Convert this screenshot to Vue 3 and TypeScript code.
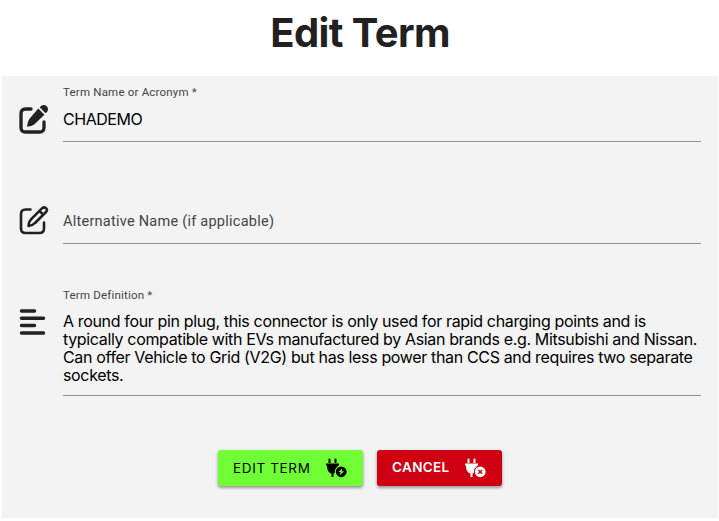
<script setup lang="ts">
import { ref } from 'vue'

const term = ref<string>('CHADEMO')
const definition: string[] = [
  'A round four pin plug, this connector is only used for rapid charging points and is',
  'typically compatible with EVs manufactured by Asian brands e.g. Mitsubishi and Nissan.',
  'Can offer Vehicle to Grid (V2G) but has less power than CCS and requires two separate',
  'sockets.',
]
</script>

<template>
  <main class="page">
    <h1 class="title">Edit Term</h1>
    <form class="panel" @submit.prevent>
      <div class="row first">
        <svg class="icon" viewBox="0 0 32 32">
          <path d="M13 5H7.5Q3 5 3 9.500V23.500Q3 28 7.500 28H21.500Q26 28 26 23.500V18" fill="none" stroke="currentColor" stroke-width="3.300" stroke-linecap="round" />
          <path d="M20.300 4.600L26.400 10.700L16.200 20.600Q14 22.500 9 22.800Q9.200 18 11.300 15ZM21.700 3.300L23.100 2Q26 0 28.800 2.300Q31.200 5.200 29 8L27.600 9.300Z" fill="currentColor" />
        </svg>
        <div class="field">
          <label class="label">Term Name or Acronym *</label>
          <div class="value">{{ term }}</div>
        </div>
      </div>
      <div class="row second">
        <svg class="icon" viewBox="0 0 32 32">
          <g fill="none" stroke="currentColor" stroke-width="2.600" stroke-linecap="round" stroke-linejoin="round">
            <path d="M12.500 4.500H7.500Q3 4.500 3 9V23.500Q3 28 7.500 28H21.500Q26 28 26 23.500V17.500" />
            <path d="M10.500 21Q10.500 17 13 14.300L24.200 3.200Q26 1.500 28 3.200Q29.800 5 28 7L17 18Q14.700 20.600 10.500 21ZM21.500 6L25.200 9.700" />
          </g>
        </svg>
        <div class="field"><label class="placeholder">Alternative Name (if applicable)</label></div>
      </div>
      <div class="row third">
        <svg class="icon" viewBox="0 0 32 32">
          <path d="M3.500 5H16.500M3.500 12.300H25.500M3.500 19.600H16.500M3.500 27H25.500" fill="none" stroke="currentColor" stroke-width="3.500" stroke-linecap="round" />
        </svg>
        <div class="field">
          <label class="label">Term Definition *</label>
          <div class="definition">
            <div v-for="(line, i) in definition" :key="i">{{ line }}</div>
          </div>
        </div>
      </div>
      <div class="actions">
        <button class="button edit" type="submit">
          <span>EDIT TERM</span>
          <svg class="plug" viewBox="0 0 22 20">
            <path d="M3.500 5V1.500Q3.500 .5 4.500 .5T5.500 1.500V5ZM9.500 5V1.500Q9.500 .5 10.500 .5T11.500 1.500V5ZM1 5.500H14V7.500H13V8.300Q9.500 10.200 9.700 15L8.500 15.800V19H6.500V15.800Q2.200 14.200 2 9V7.500H1Z" fill="currentColor" />
            <circle cx="16.200" cy="13.800" r="5.400" fill="currentColor" />
            <path class="mark" d="M17.400 10.200L13.300 14.100H15.700L14.700 17.400L19.100 13.300H16.600Z" />
          </svg>
        </button>
        <button class="button cancel" type="button">
          <span>CANCEL</span>
          <svg class="plug" viewBox="0 0 22 20">
            <path d="M3.500 5V1.500Q3.500 .5 4.500 .5T5.500 1.500V5ZM9.500 5V1.500Q9.500 .5 10.500 .5T11.500 1.500V5ZM1 5.500H14V7.500H13V8.300Q9.500 10.200 9.700 15L8.500 15.800V19H6.500V15.800Q2.200 14.200 2 9V7.500H1Z" fill="currentColor" />
            <circle cx="16.200" cy="13.800" r="5.400" fill="currentColor" />
            <path class="cross" d="M14.300 11.900L18.100 15.700M18.100 11.900L14.300 15.700" />
          </svg>
        </button>
      </div>
    </form>
  </main>
</template>

<style>
body { background: #fff; }
</style>
<style scoped>
* { box-sizing: border-box; }
.page { height: 521px; padding: 0 1px 3px 2px; font-family: Roboto, sans-serif; color: #212121; overflow: hidden; }
.title { height: 76px; margin: 0; padding-top: 9px; text-align: center; font: 700 40px/48px Inter, sans-serif; letter-spacing: -0.6px; }
.panel { height: 442px; background: #f3f3f3; padding: 0 17px 0 16px; }
.row { display: flex; }
.icon { width: 32px; height: 32px; flex: none; }
.field { flex: 1; margin-left: 13px; border-bottom: 1px solid #929292; white-space: nowrap; }
.first { height: 66px; }
.first .icon { margin-top: 28px; }
.label { display: block; height: 16px; font-size: 11.5px; line-height: 16px; color: #444; letter-spacing: .2px; }
.first .label { margin-top: 8px; }
.value { margin-top: 9px; font: 16px/20px Inter, sans-serif; color: #000; letter-spacing: -.45px; }
.second { height: 102px; }
.second .icon { margin-top: 63px; }
.placeholder { display: block; margin-top: 70px; font-size: 14.5px; line-height: 20px; color: #444; letter-spacing: .25px; }
.third { height: 152px; }
.third .icon { margin-top: 62px; margin-left: -.5px; margin-right: .5px; }
.third .label { margin-top: 43px; }
.definition { margin-top: 9px; font: 16px/18px Inter, sans-serif; color: #000; letter-spacing: -.347px; }
.actions { display: flex; justify-content: center; gap: 14px; padding: 54px 0 0; }
.button { display: flex; align-items: center; justify-content: space-between; height: 36px; border: 0; border-radius: 3px; padding: 0 16px 0 15.5px; box-shadow: 0 2px 3px rgba(0,0,0,.3), 0 1px 4px rgba(0,0,0,.12); font: 400 13.5px/20px Inter, sans-serif; letter-spacing: .65px; white-space: nowrap; }
.edit { width: 145px; background: #70ff35; color: #000; }
.cancel { width: 125px; background: #cf0012; color: #fff; font-weight: 600; letter-spacing: .35px; }
.cancel span { position: relative; top: -1px; }
.plug { width: 22px; height: 20px; flex: none; }
.mark { fill: #70ff35; }
.cross { stroke: #cf0012; stroke-width: 1.400; fill: none; }
</style>
